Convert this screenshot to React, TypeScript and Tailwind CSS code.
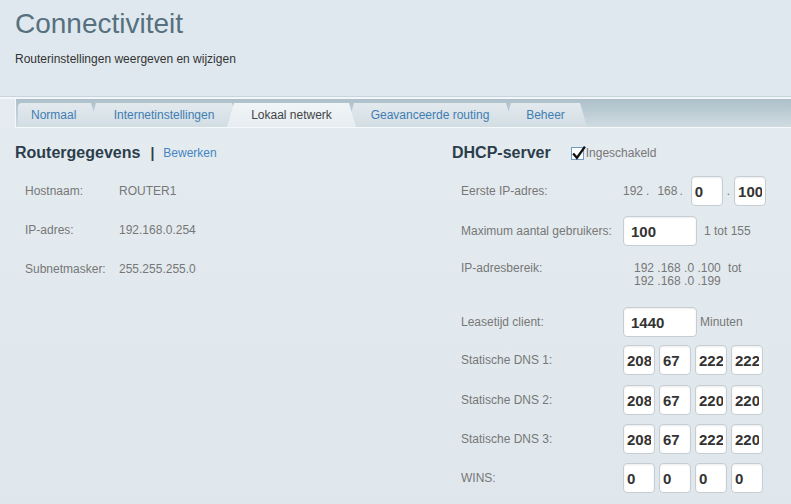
import React from "react";

const tabs = [
  { label: "Normaal", w: "w-[80px]", ml: "ml-[2px]", first: true },
  { label: "Internetinstellingen", w: "w-[150px]", ml: "-ml-[9px]" },
  { label: "Lokaal netwerk", w: "w-[129px]", ml: "-ml-[12px]", active: true },
  { label: "Geavanceerde routing", w: "w-[166px]", ml: "-ml-[9px]" },
  { label: "Beheer", w: "w-[83px]", ml: "-ml-[9px]" },
];

const small =
  "w-[32px] h-[30px] rounded-[4px] border border-[#c6ced3] bg-white px-[3px] text-[15px] font-bold text-[#333] shadow-[inset_0_1px_2px_rgba(0,0,0,0.08)] outline-none";
const wide =
  "w-[74px] h-[30px] rounded-[4px] border border-[#c6ced3] bg-white px-[7px] text-[15px] font-bold text-[#333] shadow-[inset_0_1px_2px_rgba(0,0,0,0.08)] outline-none";

function Quad({ values }: { values: string[] }) {
  return (
    <div className="flex gap-[4px]">
      {values.map((v, i) => (
        <input key={i} readOnly defaultValue={v} className={small} />
      ))}
    </div>
  );
}

function Row({ label, children, className }: { label: string; children: React.ReactNode; className: string }) {
  return (
    <div className={`flex items-center pl-[9px] ${className}`}>
      <span className="w-[162px] text-[12px] text-[#777]">{label}</span>
      {children}
    </div>
  );
}

export default function App() {
  return (
    <div className="w-[791px] h-[504px] overflow-hidden bg-gradient-to-b from-[#e6edf1] to-[#dfe7ec] font-['Liberation_Sans',Arial,sans-serif]">
      {/* Header */}
      <header className="h-[97px] bg-[#dfe8ee] px-[15px] pt-[7px] border-b border-[#c9d5dc]">
        <h1 className="text-[28px] leading-[34px] text-[#56707f]">Connectiviteit</h1>
        <p className="mt-[10px] text-[12px] leading-[16px] text-[#333]">
          Routerinstellingen weergeven en wijzigen
        </p>
      </header>
      <div className="h-[2px] bg-[#f3f6f8]" />

      {/* Tabs */}
      <nav className="ml-[15px] h-[29px] flex items-end border-l border-b border-[#f6f9fa] bg-gradient-to-b from-[#adc0ca] to-[#cfdbe1]">
        {tabs.map((t) => (
          <div
            key={t.label}
            className={`${t.w} ${t.ml} h-[24px] flex items-center text-[12px] rounded-tl-[4px] ${
              t.first
                ? "justify-start pl-[13px] [clip-path:polygon(0_0,calc(100%-7px)_0,100%_100%,0_100%)]"
                : "justify-center [clip-path:polygon(7px_0,calc(100%-7px)_0,100%_100%,0_100%)]"
            } ${
              t.active
                ? "relative z-10 bg-gradient-to-b from-[#f1f5f7] to-[#e6edf1] text-[#444]"
                : "bg-gradient-to-b from-[#e3eaee] to-[#d2dde3] text-[#3f7db3]"
            }`}
          >
            {t.label}
          </div>
        ))}
      </nav>

      {/* Content */}
      <div className="flex pt-[16px]">
        {/* Left column */}
        <section className="w-[452px] pl-[15px]">
          <div className="flex items-center h-[18px]">
            <h2 className="text-[16px] font-bold text-[#2c3e4c]">Routergegevens</h2>
            <span className="ml-[10px] text-[14px] font-bold text-[#2c3e4c]">|</span>
            <a className="ml-[9px] text-[12px] text-[#4485c2]">Bewerken</a>
          </div>
          <div className="mt-[9px] pl-[10px] text-[12px] text-[#777]">
            {[
              ["Hostnaam:", "ROUTER1"],
              ["IP-adres:", "192.168.0.254"],
              ["Subnetmasker:", "255.255.255.0"],
            ].map(([l, v]) => (
              <div key={l} className="flex items-center h-[39px]">
                <span className="w-[94px]">{l}</span>
                <span>{v}</span>
              </div>
            ))}
          </div>
        </section>

        {/* Right column */}
        <section className="flex-1">
          <div className="flex items-center h-[18px]">
            <h2 className="text-[16px] font-bold text-[#2c3e4c]">DHCP-server</h2>
            <span className="ml-[20px] relative w-[13px] h-[13px] border border-[#6f9cc4] bg-white">
              <svg viewBox="0 0 14 14" className="absolute -left-[1px] -top-[3px] w-[15px] h-[15px]">
                <path d="M2 8 L5.5 12 L13 1.5" fill="none" stroke="#111" strokeWidth="2.2" />
              </svg>
            </span>
            <span className="ml-[2px] text-[12px] text-[#777]">Ingeschakeld</span>
          </div>

          <Row label="Eerste IP-adres:" className="mt-[14px]">
            <div className="flex items-center text-[12px] text-[#777]">
              <span>192</span>
              <span className="ml-[3px]">.</span>
              <span className="ml-[8px]">168</span>
              <span className="ml-[2px] mr-[8px]">.</span>
              <input readOnly defaultValue="0" className={small} />
              <span className="mx-[4px]">.</span>
              <input readOnly defaultValue="100" className={small} />
            </div>
          </Row>

          <Row label="Maximum aantal gebruikers:" className="mt-[10px]">
            <input readOnly defaultValue="100" className={wide} />
            <span className="ml-[7px] text-[12px] text-[#777]">1 tot 155</span>
          </Row>

          <div className="mt-[16px] flex items-start pl-[9px] text-[12px] leading-[13px] text-[#777]">
            <span className="w-[173px]">IP-adresbereik:</span>
            <div>
              <div>
                192 .168 .0 .100 <span className="ml-[4px]">tot</span>
              </div>
              <div>192 .168 .0 .199</div>
            </div>
          </div>

          <Row label="Leasetijd client:" className="mt-[19px]">
            <input readOnly defaultValue="1440" className={wide} />
            <span className="ml-[3px] text-[12px] text-[#777]">Minuten</span>
          </Row>

          <Row label="Statische DNS 1:" className="mt-[8px]">
            <Quad values={["208", "67", "222", "222"]} />
          </Row>
          <Row label="Statische DNS 2:" className="mt-[10px]">
            <Quad values={["208", "67", "220", "220"]} />
          </Row>
          <Row label="Statische DNS 3:" className="mt-[9px]">
            <Quad values={["208", "67", "222", "220"]} />
          </Row>
          <Row label="WINS:" className="mt-[9px]">
            <Quad values={["0", "0", "0", "0"]} />
          </Row>
        </section>
      </div>
    </div>
  );
}
